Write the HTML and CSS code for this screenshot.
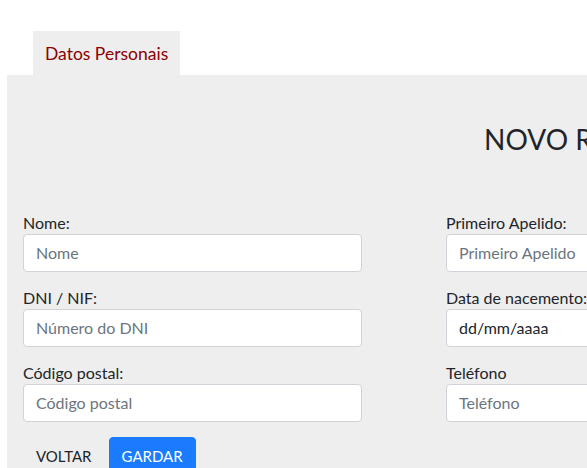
FILE: index.html
```html
<!DOCTYPE html>
<html lang="gl">
<head>
<meta charset="utf-8">
<title>Novo rexistro</title>
<link rel="stylesheet" href="styles.css">
</head>
<body>
<div class="page">
  <nav class="tabs">
    <a class="tab active" href="#">Datos Personais</a>
    <span class="tab-edge"></span>
  </nav>
  <section class="panel">
    <h2 class="title">NOVO REXISTRO</h2>
    <form class="form">
      <div class="grid">
        <div class="group">
          <label class="label">Nome:</label>
          <input class="input" type="text" placeholder="Nome">
        </div>
        <div class="group">
          <label class="label">Primeiro Apelido:</label>
          <input class="input" type="text" placeholder="Primeiro Apelido">
        </div>
        <div class="group">
          <label class="label">DNI / NIF:</label>
          <input class="input" type="text" placeholder="Número do DNI">
        </div>
        <div class="group">
          <label class="label">Data de nacemento:</label>
          <input class="input" type="text" value="dd/mm/aaaa">
        </div>
        <div class="group">
          <label class="label">Código postal:</label>
          <input class="input" type="text" placeholder="Código postal">
        </div>
        <div class="group">
          <label class="label">Teléfono</label>
          <input class="input" type="text" placeholder="Teléfono">
        </div>
      </div>
      <div class="actions">
        <button class="btn btn-link" type="button">VOLTAR</button>
        <button class="btn btn-primary" type="button">GARDAR</button>
      </div>
    </form>
  </section>
</div>
</body>
</html>
```
FILE: styles.css
```css
html, body {
  margin: 0;
  padding: 0;
  overflow: hidden;
  background: #fff;
}

body {
  font-family: Lato, "Liberation Sans", sans-serif;
  font-size: 16px;
  color: #212529;
}

.page {
  padding: 31px 0 0 7px;
  width: 1200px;
}

.tabs {
  display: flex;
  align-items: flex-end;
  margin-left: 26px;
  height: 44px;
}

.tab {
  display: block;
  padding: 11px 12px 9px 12px;
  font-size: 17.5px;
  line-height: 24px;
  color: #8b0000;
  text-decoration: none;
  background: #eeeeee;
}

.tab-edge {
  width: 2px;
  height: 2px;
  background: #2f6fd6;
  margin-left: 408px;
  margin-bottom: 13px;
}

.panel {
  background: #eeeeee;
  padding: 47px 16px 40px 16px;
  height: 600px;
}

.title {
  margin: 0 0 56px 0;
  padding-left: 461px;
  font-size: 28px;
  line-height: 34px;
  font-weight: 400;
  color: #212529;
}

.grid {
  display: grid;
  grid-template-columns: 339px 339px;
  column-gap: 84px;
}

.group {
  display: flex;
  flex-direction: column;
  margin-bottom: 15px;
}

.label {
  font-size: 16px;
  line-height: 22px;
}

.input {
  box-sizing: border-box;
  height: 38px;
  padding: 5px 12px 7px 12px;
  border: 1px solid #ced4da;
  border-radius: 4px;
  background: #fff;
  font-family: inherit;
  font-size: 16px;
  line-height: 24px;
  color: #212529;
  outline: none;
}

.input::placeholder {
  color: #6c757d;
  opacity: 1;
}

.actions {
  display: flex;
  gap: 4px;
}

.btn {
  box-sizing: border-box;
  height: 38px;
  padding: 6px 12px;
  border: 1px solid transparent;
  border-radius: 4px;
  font-family: inherit;
  font-size: 15px;
  line-height: 24px;
  cursor: pointer;
}

.btn-link {
  background: transparent;
  color: #212529;
}

.btn-primary {
  background: #1a7bff;
  border-color: #1a7bff;
  color: #fff;
}
```
